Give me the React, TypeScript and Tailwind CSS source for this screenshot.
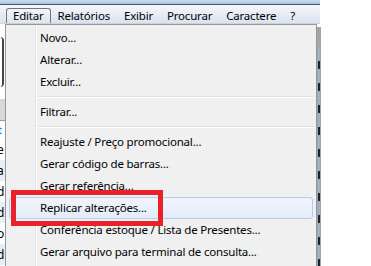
import React from 'react';

type Entry = { label: string; sep?: false; active?: boolean } | { sep: true };

const entries: Entry[] = [
    { label: 'Novo...' },
    { label: 'Alterar...' },
    { label: 'Excluir...' },
    { sep: true },
    { label: 'Filtrar...' },
    { sep: true },
    { label: 'Reajuste / Preço promocional...' },
    { label: 'Gerar código de barras...' },
    { label: 'Gerar referência...' },
    { label: 'Replicar alterações...', active: true },
    { label: 'Conferência estoque / Lista de Presentes...' },
    { label: 'Gerar arquivo para terminal de consulta...' },
];

const menuBar = ['Editar', 'Relatórios', 'Exibir', 'Procurar', 'Caractere', '?'];

// letters of the list that peek out behind the dropdown
const peek = [
    { ch: 'e', bg: 'bg-white' },
    { ch: 'a', bg: 'bg-[#e6eef8]' },
    { ch: 'd', bg: 'bg-white' },
    { ch: 'd', bg: 'bg-[#e6eef8]' },
    { ch: 'o', bg: 'bg-white' },
    { ch: 'd', bg: 'bg-[#e6eef8]' },
];

export default function App() {
    return (
        <div
            className="relative w-[371px] h-[266px] bg-white overflow-hidden text-[11.5px] tracking-[-0.2px] text-black"
            style={{ fontFamily: '"Noto Sans", "Open Sans", sans-serif' }}
        >
            <div className="w-[320px]">
                <div className="h-[4px] bg-gradient-to-b from-[#c9dbee] to-[#a9c3df]" />
                <div className="h-[1px] bg-[#4a5360]" />
                <div className="h-[19px] flex items-end pl-[6px] bg-gradient-to-b from-[#f4f7fb] to-[#dbe3ef] border-b border-[#c8d2e0]">
                    {menuBar.map((m, i) => (
                        <div
                            key={m}
                            className={
                                i === 0
                                    ? 'h-[15px] px-[6px] flex items-center leading-none rounded-t-[3px] border border-b-0 border-[#6d7684] bg-gradient-to-b from-[#f1f3f6] to-[#e2e6ec]'
                                    : 'h-[15px] px-[7px] flex items-center leading-none'
                            }
                        >
                            {m}
                        </div>
                    ))}
                </div>

                {/* window content behind the menu */}
                <div className="flex">
                    <div className="w-[5px] h-[241px] flex flex-col overflow-hidden">
                        <div className="h-[75px] bg-white flex items-center">
                            <div className="w-[4px] h-[50px] rounded-r-full border-r-[2px] border-[#444]" />
                        </div>
                        <div className="h-[22px] bg-[#d8d8d8] border-b border-[#9a9a9a]" />
                        <div className="h-[18px] bg-white text-[11px] leading-[18px] -ml-[2px] text-[#1a56c4]">t</div>
                        {peek.map((p, i) => (
                            <div key={i} className={`h-[21px] ${p.bg} text-[12px] leading-[21px] -ml-[3px]`}>
                                {p.ch}
                            </div>
                        ))}
                    </div>
                </div>
            </div>

            {/* dropdown */}
            <div className="absolute left-[5px] top-[24px] w-[316px] h-[250px] flex">
                <div className="w-[312px] h-full bg-[#f0f0f0] border border-[#979797] pt-[2px] px-[2px] relative">
                    <div className="absolute left-[29px] top-0 bottom-0 w-[1px] bg-[#e2e3e3]" />
                    <div className="absolute left-[30px] top-0 bottom-0 w-[1px] bg-white" />
                    {entries.map((e, i) =>
                        e.sep ? (
                            <div key={i} className="h-[8px] flex items-center pl-[30px] relative">
                                <div className="w-full">
                                    <div className="h-[1px] bg-[#e0e0e0]" />
                                    <div className="h-[1px] bg-white" />
                                </div>
                            </div>
                        ) : (
                            <div
                                key={i}
                                className={
                                    e.active
                                        ? 'relative h-[22px] flex items-center pl-[30px] mx-[1px] rounded-[3px] border border-[#aecff7] bg-gradient-to-b from-[#f0f5fc] to-[#e3ecf8]'
                                        : 'relative h-[22px] flex items-center pl-[30px] mx-[1px] border border-transparent'
                                }
                            >
                                <span className="whitespace-nowrap">{e.label}</span>
                            </div>
                        )
                    )}
                </div>
                <div className="w-[4px] h-full mt-[3px] flex flex-col bg-[#a5a5a5]">
                    <div className="w-[2px] h-full ml-[1px] bg-[repeating-linear-gradient(to_bottom,#9fb1c5_0px,#9fb1c5_14px,#10233a_14px,#10233a_22px)] mt-[20px]" />
                </div>
            </div>

            {/* red highlight frame */}
            <div className="absolute left-[11px] top-[190px] w-[152px] h-[36px] border-[5px] border-[#e8212b]" />
        </div>
    );
}
